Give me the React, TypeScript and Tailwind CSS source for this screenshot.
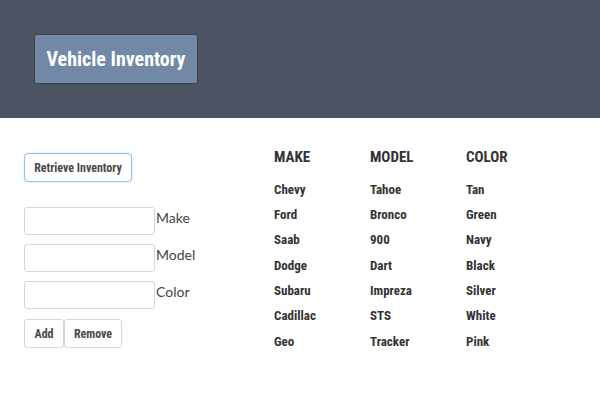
import { useState } from "react";

const cond = { fontFamily: '"Roboto Condensed", "Open Sans Condensed", sans-serif' };
const lato = { fontFamily: 'Lato, "Open Sans", sans-serif' };

const cars = [
  { make: "Chevy", model: "Tahoe", color: "Tan" },
  { make: "Ford", model: "Bronco", color: "Green" },
  { make: "Saab", model: "900", color: "Navy" },
  { make: "Dodge", model: "Dart", color: "Black" },
  { make: "Subaru", model: "Impreza", color: "Silver" },
  { make: "Cadillac", model: "STS", color: "White" },
  { make: "Geo", model: "Tracker", color: "Pink" },
];

export default function App() {
  const [make, setMake] = useState("");
  const [model, setModel] = useState("");
  const [color, setColor] = useState("");

  const fields = [
    { label: "Make", value: make, set: setMake },
    { label: "Model", value: model, set: setModel },
    { label: "Color", value: color, set: setColor },
  ];

  return (
    <div className="h-[400px] w-[600px] bg-white">
      {/* Header */}
      <div className="h-[118px] bg-[#4b5261] pl-[34px] pt-[34px]">
        <button
          type="button"
          style={cond}
          className="h-[50px] w-[164px] whitespace-nowrap rounded-[3px] border border-[#3d3f44] bg-[#7189a7] text-[20px] font-bold text-white"
        >
          Vehicle Inventory
        </button>
      </div>

      <div className="flex pl-6 pt-[35px]">
        {/* Form side */}
        <div className="w-[250px]">
          <button
            type="button"
            style={cond}
            className="h-[29px] w-[108px] whitespace-nowrap rounded-[4px] border border-[#8fc1ee] bg-white text-[12px] font-bold text-[#4a4a4a] shadow-[0_0_2px_#bcdcf7]"
          >
            Retrieve Inventory
          </button>

          <div className="mt-[25px] flex flex-col gap-[9px]">
            {fields.map((f) => (
              <div key={f.label} className="flex items-start">
                <input
                  value={f.value}
                  onChange={(e) => f.set(e.target.value)}
                  className="h-[28px] w-[131px] rounded-[3px] border border-[#d6d6d6] bg-white"
                />
                <span style={lato} className="pl-[1px] text-[14px] text-[#444]">
                  {f.label}
                </span>
              </div>
            ))}
          </div>

          <div className="mt-[10px] flex" style={cond}>
            <button
              type="button"
              className="h-[29px] w-[40px] rounded-[3px] border border-[#d6d6d6] bg-white text-[12px] font-bold text-[#4a4a4a]"
            >
              Add
            </button>
            <button
              type="button"
              className="h-[29px] w-[58px] rounded-[3px] border border-[#d6d6d6] bg-white text-[12px] font-bold text-[#4a4a4a]"
            >
              Remove
            </button>
          </div>
        </div>

        {/* Table */}
        <div style={cond} className="-mt-[6px] text-[#333]">
          <div className="flex text-[15px] font-bold leading-[20px]">
            <div className="w-[96px]">MAKE</div>
            <div className="w-[96px]">MODEL</div>
            <div className="w-[96px]">COLOR</div>
          </div>
          <div className="mt-[10px] flex flex-col">
            {cars.map((c) => (
              <div
                key={c.make}
                className="flex h-[25.3px] items-center text-[13px] font-bold"
              >
                <div className="w-[96px]">{c.make}</div>
                <div className="w-[96px]">{c.model}</div>
                <div className="w-[96px]">{c.color}</div>
              </div>
            ))}
          </div>
        </div>
      </div>
    </div>
  );
}
